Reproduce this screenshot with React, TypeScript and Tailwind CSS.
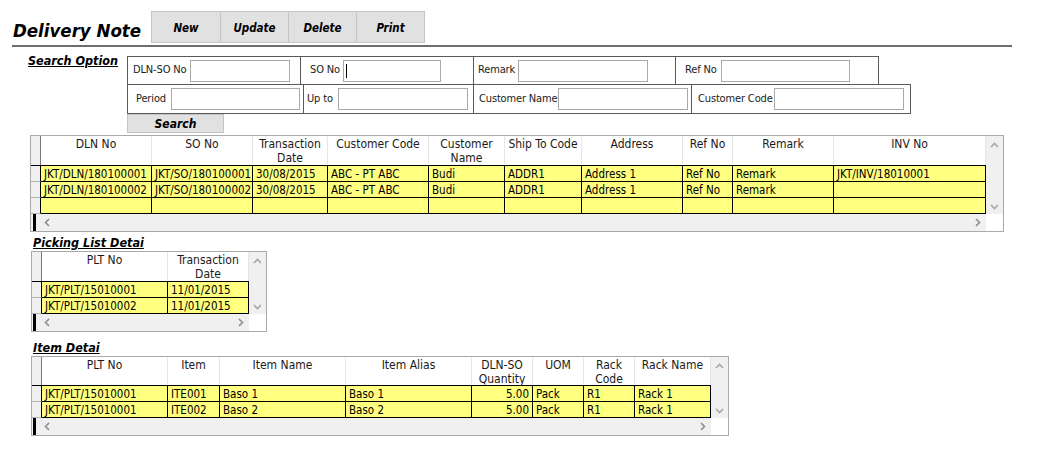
import React from 'react';

type Col = { label: string[]; w: string; right?: boolean };

const FONT = 'font-["DejaVu_Sans_Condensed","Liberation_Sans",sans-serif]';

function ChevUp() {
  return (
    <svg width="9" height="6" viewBox="0 0 9 6" className="text-[#a6a6a6]">
      <polyline points="1,5 4.5,1.5 8,5" fill="none" stroke="currentColor" strokeWidth="1.6" />
    </svg>
  );
}

function ChevDown() {
  return (
    <svg width="9" height="6" viewBox="0 0 9 6" className="text-[#a6a6a6]">
      <polyline points="1,1 4.5,4.5 8,1" fill="none" stroke="currentColor" strokeWidth="1.6" />
    </svg>
  );
}

function ChevLeft() {
  return (
    <svg width="6" height="9" viewBox="0 0 6 9" className="text-[#8c8c8c]">
      <polyline points="5,1 1.5,4.5 5,8" fill="none" stroke="currentColor" strokeWidth="1.6" />
    </svg>
  );
}

function ChevRight() {
  return (
    <svg width="6" height="9" viewBox="0 0 6 9" className="text-[#8c8c8c]">
      <polyline points="1,1 4.5,4.5 1,8" fill="none" stroke="currentColor" strokeWidth="1.6" />
    </svg>
  );
}

function Grid({
  cols,
  rows,
  headerH,
  barLeft,
}: {
  cols: Col[];
  rows: string[][];
  headerH: string;
  barLeft: string;
}) {
  return (
    <div className="w-fit border border-[#a9a9a9] bg-white">
      <div className="flex">
        <div>
          <div className={`flex ${headerH} border-b border-black`}>
            <div className="w-[10px] bg-[#f0f0f0] border-r border-[#7a7a7a]" />
            {cols.map((c, i) => (
              <div
                key={i}
                className={`${c.w} border-r border-[#e6e6e6] pt-[1px] text-center text-[12px] leading-[14px] text-[#1a1a1a]`}
              >
                {c.label.map((l, j) => (
                  <div key={j}>{l}</div>
                ))}
              </div>
            ))}
          </div>
          {rows.map((r, i) => (
            <div key={i} className="flex h-[16px]">
              <div className="w-[10px] bg-[#f0f0f0] border-r border-black border-b border-b-[#b5b5b5]" />
              {cols.map((c, j) => (
                <div
                  key={j}
                  className={`${c.w} overflow-hidden whitespace-nowrap border-r border-b border-black bg-[#ffff80] px-[3px] text-[11.5px] leading-[16px] ${c.right ? 'text-right' : ''}`}
                >
                  {r[j]}
                </div>
              ))}
            </div>
          ))}
        </div>
        <div className="flex w-[17px] flex-col items-center justify-between bg-[#f0f0f0] pt-[6px] pb-[4px]">
          <ChevUp />
          <ChevDown />
        </div>
      </div>
      <div className="flex h-[17px]">
        <div className="flex flex-1 items-center bg-[#f0f0f0]">
          <div className={`${barLeft} h-full w-[3px] bg-black`} />
          <div className="ml-[8px]">
            <ChevLeft />
          </div>
          <div className="ml-auto mr-[5px]">
            <ChevRight />
          </div>
        </div>
        <div className="w-[17px] bg-white" />
      </div>
    </div>
  );
}

function Field({
  label,
  cell,
  lbl,
  input,
  caret,
}: {
  label: string;
  cell: string;
  lbl: string;
  input: string;
  caret?: boolean;
}) {
  return (
    <div className={`${cell} flex items-center`}>
      <span className={`${lbl} shrink-0 whitespace-nowrap text-[11px] tracking-[-0.15px] text-[#1a1a1a]`}>{label}</span>
      <div className={`${input} relative h-[22px] shrink-0 border border-[#a9a9a9] bg-white`}>
        {caret && <div className="absolute left-[2px] top-[3px] h-[14px] w-px bg-black" />}
      </div>
    </div>
  );
}

const mainCols: Col[] = [
  { label: ['DLN No'], w: 'w-[111px]' },
  { label: ['SO No'], w: 'w-[101px]' },
  { label: ['Transaction', 'Date'], w: 'w-[75px]' },
  { label: ['Customer Code'], w: 'w-[101px]' },
  { label: ['Customer', 'Name'], w: 'w-[76px]' },
  { label: ['Ship To Code'], w: 'w-[77px]' },
  { label: ['Address'], w: 'w-[101px]' },
  { label: ['Ref No'], w: 'w-[50px]' },
  { label: ['Remark'], w: 'w-[101px]' },
  { label: ['INV No'], w: 'w-[152px]' },
];

const mainRows = [
  ['JKT/DLN/180100001', 'JKT/SO/180100001', '30/08/2015', 'ABC - PT ABC', 'Budi', 'ADDR1', 'Address 1', 'Ref No', 'Remark', 'JKT/INV/18010001'],
  ['JKT/DLN/180100002', 'JKT/SO/180100002', '30/08/2015', 'ABC - PT ABC', 'Budi', 'ADDR1', 'Address 1', 'Ref No', 'Remark', ''],
  ['', '', '', '', '', '', '', '', '', ''],
];

const pickCols: Col[] = [
  { label: ['PLT No'], w: 'w-[126px]' },
  { label: ['Transaction', 'Date'], w: 'w-[81px]' },
];

const pickRows = [
  ['JKT/PLT/15010001', '11/01/2015'],
  ['JKT/PLT/15010002', '11/01/2015'],
];

const itemCols: Col[] = [
  { label: ['PLT No'], w: 'w-[126px]' },
  { label: ['Item'], w: 'w-[52px]' },
  { label: ['Item Name'], w: 'w-[126px]' },
  { label: ['Item Alias'], w: 'w-[126px]' },
  { label: ['DLN-SO', 'Quantity'], w: 'w-[61px]', right: true },
  { label: ['UOM'], w: 'w-[51px]' },
  { label: ['Rack', 'Code'], w: 'w-[51px]' },
  { label: ['Rack Name'], w: 'w-[76px]' },
];

const itemRows = [
  ['JKT/PLT/15010001', 'ITE001', 'Baso 1', 'Baso 1', '5.00', 'Pack', 'R1', 'Rack 1'],
  ['JKT/PLT/15010001', 'ITE002', 'Baso 2', 'Baso 2', '5.00', 'Pack', 'R1', 'Rack 1'],
];

export default function App() {
  return (
    <div className={`h-[450px] w-[1050px] overflow-hidden bg-white text-black ${FONT}`}>
      {/* title bar */}
      <div className="flex items-start pl-[13px] pt-[11px]">
        <h1 className="w-[138px] pt-[7px] text-[18.5px] font-bold italic leading-[26px] text-black">Delivery Note</h1>
        <div className="flex h-[32px] border border-[#c4c4c4] bg-[#e1e1e1]">
          {['New', 'Update', 'Delete', 'Print'].map((b, i) => (
            <div
              key={b}
              className={`flex w-[68px] items-center justify-center pt-[3px] text-[11.5px] font-bold italic ${i > 0 ? 'border-l border-[#c4c4c4]' : ''}`}
            >
              {b}
            </div>
          ))}
        </div>
      </div>
      <div className="ml-[12px] mt-[1px] h-[2px] w-[1000px] bg-[#6e6e6e]" />

      {/* search option */}
      <div className="mt-[9px] flex">
        <div className="w-[127px] pl-[28px]">
          <span className="-mt-[3px] block text-[12.5px] font-bold italic underline leading-[16px]">Search Option</span>
        </div>
        <div>
          <div className="flex h-[29px] w-[752px] border border-[#5a5a5a]">
            <Field label="DLN-SO No" cell="w-[172px]" lbl="w-[62px] pl-[5px]" input="w-[100px]" />
            <Field label="SO No" cell="w-[173px] border-l border-[#5a5a5a]" lbl="w-[42px] pl-[9px]" input="w-[98px]" caret />
            <Field label="Remark" cell="w-[202px] border-l border-[#5a5a5a]" lbl="w-[44px] pl-[4px]" input="w-[130px]" />
            <Field label="Ref No" cell="w-[203px] border-l border-[#5a5a5a]" lbl="w-[45px] pl-[9px]" input="w-[129px]" />
          </div>
          <div className="-mt-px flex h-[30px] w-[784px] border border-[#5a5a5a]">
            <Field label="Period" cell="w-[175px]" lbl="w-[43px] pl-[8px]" input="w-[129px]" />
            <Field label="Up to" cell="w-[170px] border-l border-[#5a5a5a]" lbl="w-[34px] pl-[3px]" input="w-[130px]" />
            <Field label="Customer Name" cell="w-[218px] border-l border-[#5a5a5a]" lbl="w-[84px] pl-[5px]" input="w-[130px]" />
            <Field label="Customer Code" cell="w-[219px] border-l border-[#5a5a5a]" lbl="w-[82px] pl-[6px]" input="w-[130px]" />
          </div>
          <div className="flex h-[19px] w-[97px] items-center justify-center border border-[#c4c4c4] bg-[#e1e1e1] text-[12px] font-bold italic">
            Search
          </div>
        </div>
      </div>

      {/* main grid */}
      <div className="ml-[30px] mt-[2px]">
        <Grid cols={mainCols} rows={mainRows} headerH="h-[30px]" barLeft="ml-[2px]" />
      </div>

      {/* picking list */}
      <div className="ml-[33px] mt-[3px] h-[16px] text-[12.5px] font-bold italic underline leading-[16px]">Picking List Detai</div>
      <div className="ml-[31px]">
        <Grid cols={pickCols} rows={pickRows} headerH="h-[30px]" barLeft="ml-[1px]" />
      </div>

      {/* item detail */}
      <div className="ml-[33px] mt-[8px] h-[16px] text-[12.5px] font-bold italic underline leading-[16px]">Item Detai</div>
      <div className="ml-[31px]">
        <Grid cols={itemCols} rows={itemRows} headerH="h-[29px]" barLeft="ml-[1px]" />
      </div>
    </div>
  );
}
